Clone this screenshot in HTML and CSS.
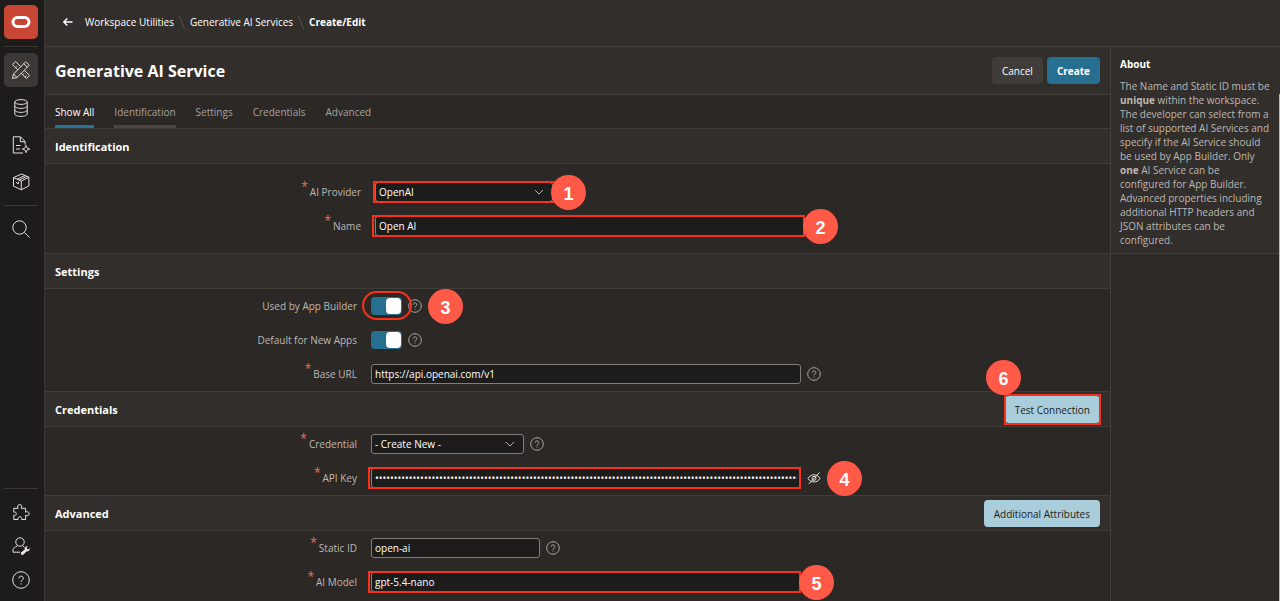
FILE: index.html
```
<!DOCTYPE html>
<html lang="en">
<head>
  <meta charset="UTF-8">
  <title>Generative AI Service</title>
  <link rel="stylesheet" href="styles.css">
</head>
<body>

<!-- shared icons -->
<svg class="defs" aria-hidden="true">
  <symbol id="help" viewBox="0 0 14 14">
    <circle cx="7" cy="7" r="6.3"/>
    <path d="M5.2 5.6a1.8 1.8 0 1 1 2.7 1.6c-.6.3-.9.6-.9 1.2M7 9.6v.9"/>
  </symbol>
  <symbol id="chevron" viewBox="0 0 10 6">
    <path d="M1 1l4 4 4-4"/>
  </symbol>
</svg>

<nav class="sidebar">
  <a href="#" class="logo" aria-label="Home">
    <svg width="20" height="14" viewBox="0 0 20 14"><rect x="2" y="2.500" width="16" height="9" rx="4.500"/></svg>
  </a>
  <hr>
  <a href="#" class="nav-item active" aria-label="App Builder">
    <svg width="20" height="20" viewBox="0 0 20 20">
      <path d="M1.500 4.600l3.100-3.100 13.900 13.900-3.100 3.100zM4.600 7.700l1.500-1.500M7 10.100l1.500-1.500M11.700 14.800l1.500-1.500M13.900 17l1.500-1.500"/>
      <path class="cut" d="M1.500 18.500l1-4.500L14.800 1.700l3.500 3.500L6 17.500z"/>
      <path d="M2.500 14l3.500 3.500M12.800 3.700l3.500 3.500"/>
    </svg>
  </a>
  <a href="#" class="nav-item" aria-label="SQL Workshop">
    <svg width="20" height="20" viewBox="0 0 20 20">
      <ellipse cx="10" cy="4" rx="6.2" ry="2.4"/>
      <path d="M3.8 4v12c0 1.300 2.800 2.400 6.200 2.400s6.200-1.100 6.200-2.400V4M3.800 8c0 1.300 2.800 2.400 6.200 2.400s6.200-1.100 6.200-2.400M3.800 12c0 1.300 2.800 2.400 6.200 2.400s6.200-1.100 6.200-2.400"/>
    </svg>
  </a>
  <a href="#" class="nav-item" aria-label="Team Development">
    <svg width="20" height="20" viewBox="0 0 20 20">
      <path d="M12 18H2.300V1.800h7.200l4.600 4.700v3.200M9.300 2v4.700H14M5 10.500h4.500M5 14h4"/>
      <path d="M15 10.300c.5 2.500 1.200 3.200 3.700 3.700-2.500.5-3.200 1.200-3.700 3.700-.5-2.500-1.200-3.200-3.700-3.700 2.500-.5 3.200-1.200 3.700-3.700z"/>
    </svg>
  </a>
  <a href="#" class="nav-item" aria-label="Gallery">
    <svg width="20" height="20" viewBox="0 0 20 20">
      <path d="M2.500 5.600L10.600 2l7.300 3.200v8.700l-7.600 3.900-7.800-3.700zM2.500 5.600l7.800 3.500 7.600-3.900M10.300 9.100v8.700M6 7.200l8-3.700M8 8.100l7.800-3.700M5 10.500l2.500 1.200v-2"/>
    </svg>
  </a>
  <hr>
  <a href="#" class="nav-item" aria-label="Search">
    <svg width="20" height="20" viewBox="0 0 20 20"><circle cx="8.500" cy="8.500" r="6.700"/><path d="M13.300 13.300l5.200 5.200"/></svg>
  </a>
  <div class="sidebar-bottom">
    <hr>
    <a href="#" class="nav-item" aria-label="Extensions">
      <svg width="20" height="20" viewBox="0 0 20 20">
        <path d="M2.800 6.300h4.400c-.9-1.200-.8-3.800 1.500-3.800s2.400 2.600 1.500 3.800h4.400v3.900c1.200-.9 3.600-.6 3.600 1.500s-2.400 2.400-3.600 1.500v4.300h-3.900c.4-1.600-.3-2.700-1.800-2.700s-2.200 1.100-1.800 2.700H2.800v-4.200c1.500.4 2.500-.2 2.500-1.600S4.300 9.800 2.800 10.200z"/>
      </svg>
    </a>
    <a href="#" class="nav-item" aria-label="Administration">
      <svg width="20" height="20" viewBox="0 0 20 20">
        <circle cx="9" cy="6" r="4.200"/>
        <path d="M6.300 9.800C4 11.500 2 12 2 13.500v2.700h7M11.500 9.800l2 1.600"/>
        <path class="solid" d="M10 16.600l3.700-3.100c-.2-2 .9-3.500 3-3.600l-1.200 2 1.500 1.500 1.900-1.100c.2 2.100-1.500 3.600-3.500 3.200l-3.100 3.200c-1.500 1.100-3.200-.8-2.300-2.100z"/>
      </svg>
    </a>
    <a href="#" class="nav-item" aria-label="Help">
      <svg width="20" height="20" viewBox="0 0 20 20"><circle cx="10" cy="10" r="8.300"/><path d="M7.900 8.300a2.200 2.200 0 1 1 3.300 1.900c-.8.400-1.100.8-1.100 1.600M10.100 13.300v1.200"/></svg>
    </a>
  </div>
</nav>

<div class="page">
  <header class="breadcrumb">
    <a href="#" class="back" aria-label="Back">
      <svg width="10" height="10" viewBox="0 0 10 10"><path d="M9.500 5H1M4.300 1.500L.9 5l3.400 3.500"/></svg>
    </a>
    <a href="#">Workspace Utilities</a>
    <svg class="slash" width="8" height="14" viewBox="0 0 8 14"><path d="M1 0l5.500 14"/></svg>
    <a href="#">Generative AI Services</a>
    <svg class="slash" width="8" height="14" viewBox="0 0 8 14"><path d="M1 0l5.500 14"/></svg>
    <strong>Create/Edit</strong>
  </header>

  <div class="columns">
    <main>
      <div class="title-bar">
        <h1>Generative AI Service</h1>
        <button class="btn">Cancel</button>
        <button class="btn btn-primary">Create</button>
      </div>

      <div class="tabs">
        <a href="#" class="current">Show All</a>
        <a href="#identification" class="next">Identification</a>
        <a href="#settings">Settings</a>
        <a href="#credentials">Credentials</a>
        <a href="#advanced">Advanced</a>
      </div>

      <section id="identification">
        <div class="section-head"><h2>Identification</h2></div>
        <div class="fields inset">
          <div class="row">
            <label class="required" for="provider">AI Provider</label>
            <div class="control">
              <select id="provider" class="wide"><option>OpenAI</option></select>
              <svg class="chevron"><use href="#chevron"/></svg>
              <span class="frame frame-select"></span>
              <span class="badge">1</span>
            </div>
          </div>
          <div class="row">
            <label class="required" for="name">Name</label>
            <div class="control">
              <input type="text" id="name" value="Open AI">
              <span class="frame"></span>
              <span class="badge">2</span>
            </div>
          </div>
        </div>
      </section>

      <section id="settings">
        <div class="section-head"><h2>Settings</h2></div>
        <div class="fields">
          <div class="row">
            <label for="builder">Used by App Builder</label>
            <div class="control">
              <input type="checkbox" id="builder" class="switch" checked>
              <svg class="help"><use href="#help"/></svg>
              <span class="frame frame-switch"></span>
              <span class="badge badge-apart">3</span>
            </div>
          </div>
          <div class="row">
            <label for="default">Default for New Apps</label>
            <div class="control">
              <input type="checkbox" id="default" class="switch" checked>
              <svg class="help"><use href="#help"/></svg>
            </div>
          </div>
          <div class="row">
            <label class="required" for="url">Base URL</label>
            <div class="control">
              <input type="text" id="url" value="https://api.openai.com/v1">
              <svg class="help"><use href="#help"/></svg>
            </div>
          </div>
        </div>
      </section>

      <section id="credentials">
        <div class="section-head">
          <h2>Credentials</h2>
          <div class="control">
            <button class="btn btn-light">Test Connection</button>
            <span class="frame frame-button"></span>
            <span class="badge badge-button">6</span>
          </div>
        </div>
        <div class="fields">
          <div class="row">
            <label class="required" for="credential">Credential</label>
            <div class="control">
              <div class="control">
                <select id="credential"><option>- Create New -</option></select>
                <svg class="chevron"><use href="#chevron"/></svg>
              </div>
              <svg class="help"><use href="#help"/></svg>
            </div>
          </div>
          <div class="row">
            <label class="required" for="key">API Key</label>
            <div class="control">
              <input type="password" id="key" value="sk-proj-0000000000000000000000000000000000000000000000000000000000000000000000000000000000000000000000000000000000000000000000000000000000000000">
              <svg class="eye" viewBox="0 0 14 14"><path d="M1 7.500c2.500-5 9.500-5 12 0-2.500 4.600-9.500 4.600-12 0zM1.800 13L12.500 1.500"/><circle cx="7" cy="7.300" r="2"/></svg>
              <span class="frame frame-key"></span>
              <span class="badge badge-apart">4</span>
            </div>
          </div>
        </div>
      </section>

      <section id="advanced">
        <div class="section-head">
          <h2>Advanced</h2>
          <button class="btn btn-light">Additional Attributes</button>
        </div>
        <div class="fields">
          <div class="row">
            <label class="required" for="static">Static ID</label>
            <div class="control">
              <input type="text" id="static" class="medium" value="open-ai">
              <svg class="help"><use href="#help"/></svg>
            </div>
          </div>
          <div class="row">
            <label class="required" for="model">AI Model</label>
            <div class="control">
              <input type="text" id="model" value="gpt-5.4-nano">
              <span class="frame"></span>
              <span class="badge">5</span>
            </div>
          </div>
        </div>
      </section>
    </main>

    <aside>
      <div class="about">
        <h3>About</h3>
        <p>The Name and Static ID must be <b>unique</b> within the workspace. The developer can select from a list of supported AI Services and specify if the AI Service should be used by App Builder. Only <b>one</b> AI Service can be configured for App Builder. Advanced properties including additional HTTP headers and JSON attributes can be configured.</p>
      </div>
    </aside>
  </div>
</div>

</body>
</html>
```
FILE: styles.css
```
* {
  box-sizing: border-box;
}
body {
  margin: 0;
  display: flex;
  height: 100vh;
  overflow: hidden;
  background: #2c2825;
  color: #fff;
  font-family: "Open Sans", sans-serif;
  font-size: 10px;
  line-height: 14px;
}
a {
  color: inherit;
  text-decoration: none;
}
h1, h2, h3, p {
  margin: 0;
}
svg {
  display: block;
  flex: none;
  fill: none;
  stroke: currentColor;
}
.defs {
  position: absolute;
  width: 0;
  height: 0;
}

/* sidebar */
.sidebar {
  flex: none;
  display: flex;
  flex-direction: column;
  width: 45px;
  padding: 5px 6px 4px 4px;
  background: #1e1c1a;
  border-right: 1px solid #3a3633;
}
.sidebar hr {
  width: 100%;
  margin: 7px 0 6px;
  border: 0;
  border-top: 1px solid #3b3734;
}
.logo, .nav-item {
  display: flex;
  align-items: center;
  justify-content: center;
  height: 34px;
  border-radius: 5px;
}
.logo {
  background: #c74634;
}
.logo svg {
  stroke-width: 3;
}
.nav-item {
  color: #e4e1dd;
}
.sidebar > .nav-item + .nav-item {
  height: 33px;
  margin-top: 4px;
}
.nav-item.active {
  background: #3b3835;
}
.cut {
  fill: #3b3835;
}
.solid {
  fill: currentColor;
  stroke: none;
}
.sidebar-bottom {
  margin-top: auto;
}

/* page header */
.page {
  flex: 1;
  display: flex;
  flex-direction: column;
  min-width: 0;
}
.breadcrumb {
  flex: none;
  display: flex;
  align-items: center;
  height: 47px;
  padding: 0 18px 2px;
  background: #322e2b;
  border-bottom: 1px solid #433f3b;
}
.back {
  margin-right: 12px;
}
.back svg {
  stroke-width: 1.5;
}
.slash {
  margin: 0 4px;
  color: #55514d;
}
.columns {
  flex: 1;
  display: flex;
  min-height: 0;
}
main {
  flex: 1;
  min-width: 0;
}
.title-bar {
  display: flex;
  align-items: center;
  gap: 4px;
  height: 48px;
  padding: 0 10px;
  background: #322e2b;
  border-bottom: 1px solid #433f3b;
}
h1 {
  flex: 1;
  font-size: 16px;
  line-height: 24px;
}
.btn {
  height: 27px;
  padding: 0 10px;
  border: 0;
  border-radius: 4px;
  background: #403c39;
  color: #fff;
  font: inherit;
  cursor: pointer;
}
.btn-primary {
  background: #266f90;
  font-weight: bold;
}
.btn-light {
  background: #aacddc;
  color: #1e1c1a;
}
.tabs {
  display: flex;
  gap: 20px;
  height: 33px;
  padding: 0 10px;
  color: #a5a19d;
}
.tabs a {
  padding-top: 10px;
  border-bottom: 3px solid transparent;
}
.tabs .current {
  color: #fff;
  border-color: #287499;
}
.tabs .next {
  border-color: #4a4643;
}

/* form sections */
.section-head {
  display: flex;
  align-items: center;
  justify-content: space-between;
  height: 36px;
  padding: 1px 10px 0;
  background: #322e2b;
  border: solid #403c38;
  border-width: 1px 0;
}
h2 {
  font-size: 11px;
  line-height: 16px;
}
.inset {
  padding: 11px 0 10px 4px;
}
.row {
  display: flex;
  align-items: center;
  gap: 14px;
  height: 34px;
}
.row label {
  width: 312px;
  text-align: right;
  color: #bcb8b4;
}
.required::before {
  content: "*";
  margin-right: 2px;
  font-size: 12px;
  line-height: 0;
  vertical-align: 5px;
  color: #f0705c;
}
.control {
  position: relative;
  display: flex;
  align-items: center;
  gap: 6px;
}
.row input, .row select {
  appearance: none;
  margin: 0;
  width: 430px;
  height: 20px;
  padding: 0 3px;
  border: 1px solid #827e7a;
  border-radius: 3px;
  background: #1e1c1a;
  color: #fff;
  font: inherit;
}
.row select {
  width: 153px;
}
.row select.wide {
  width: 178px;
}
.row input.medium {
  width: 169px;
}
.chevron {
  position: absolute;
  right: 9px;
  width: 10px;
  height: 6px;
  color: #b5b1ad;
}
.help {
  width: 14px;
  height: 14px;
  color: #aaa6a2;
}
.eye {
  width: 14px;
  height: 14px;
  color: #e4e1dd;
}
.row .switch {
  width: 31px;
  height: 18px;
  padding: 0 1px;
  border: 0;
  border-radius: 4px;
  background: #266f90;
  display: flex;
  align-items: center;
  justify-content: flex-end;
}
.switch::before {
  content: "";
  width: 15px;
  height: 16px;
  border-radius: 4px;
  background: #fff;
}

/* step markers laid over the form */
.frame {
  position: absolute;
  inset: -1px 0 -1px -3px;
  border: 2px solid #f8311b;
}
.frame-select {
  inset: -1px -10px -1px -2px;
}
.frame-switch {
  inset: -6px 10px -5px -9px;
  border-radius: 15px;
}
.frame-key {
  right: 20px;
}
.frame-button {
  inset: -2px -1px;
}
.badge {
  position: absolute;
  right: -33px;
  width: 35px;
  height: 35px;
  border-radius: 50%;
  background: #ff5947;
  font: bold 18px/38px "Liberation Sans", Arial, sans-serif;
  text-align: center;
}
.badge-apart {
  right: -41px;
}
.badge-button {
  top: -36px;
  right: 79px;
}

/* help column */
aside {
  position: relative;
  flex: none;
  width: 170px;
  border-left: 1px solid #433f3b;
  background: #2e2a27;
}
aside::after {
  content: "";
  position: absolute;
  inset: 47px 0 0 auto;
  width: 1px;
  background: #b9b7b5;
}
.about {
  padding: 10px 9px 6px;
  background: #322e2b;
  border-bottom: 1px solid #433f3b;
  color: #bcb8b4;
}
h3 {
  margin-bottom: 8px;
  color: #fff;
  font-size: 10px;
  line-height: 14px;
}
```
